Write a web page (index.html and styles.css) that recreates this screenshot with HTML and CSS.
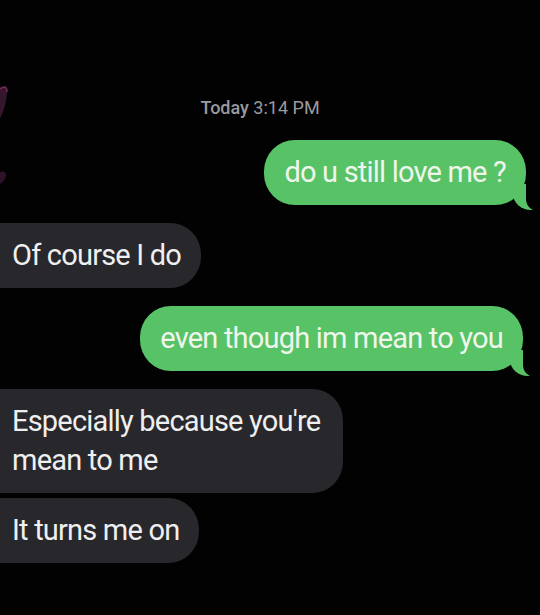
FILE: index.html
```html
<!DOCTYPE html>
<html>
<head>
    <title>Messages</title>
    <link rel="stylesheet" href="styles.css">
</head>
<body>
    <svg class="glare" width="12" height="120" viewBox="0 0 12 120">
        <path d="M0 20 Q8 15 7 26 Q5 42 0 50 Z" fill="#3a1832" opacity="0.9"/>
        <path d="M0 21 Q7 16 7 24" fill="none" stroke="#8a3366" stroke-width="1.5" opacity="0.8"/>
        <path d="M0 104 Q6 102 6 108 Q4 114 0 116 Z" fill="#3a1832" opacity="0.8"/>
    </svg>
    <div class="thread">
        <div class="stamp"><b>Today</b> 3:14 PM</div>
        <div class="bubble sent first">do u still love me ?</div>
        <div class="bubble recv">Of course I do</div>
        <div class="bubble sent second">even though im mean to you</div>
        <div class="bubble recv wide">Especially because you're mean to me</div>
        <div class="bubble recv">It turns me on</div>
    </div>
</body>
</html>
```

FILE: styles.css
```css
body {
    margin: 0;
    background-color: #020203;
    font-family: Roboto, "Liberation Sans", sans-serif;
    height: 615px;
    overflow: hidden;
    position: relative;
}
.glare {
    position: absolute;
    left: 0;
    top: 68px;
}
.thread {
    display: flex;
    flex-direction: column;
    padding-top: 97px;
}
.stamp {
    text-align: center;
    padding-right: 20px;
    color: #9a9a9d;
    font-size: 18px;
    line-height: 22px;
    margin-bottom: 21px;
}
.stamp b {
    font-weight: 500;
}
.bubble {
    position: relative;
    box-sizing: border-box;
    font-size: 29px;
    line-height: 39px;
    letter-spacing: -0.8px;
    padding: 13px 20px;
    border-radius: 31px;
    margin-bottom: 18px;
}
.sent {
    align-self: flex-end;
    background-color: #58c266;
    color: #eef6ec;
}
.sent.first {
    margin-right: 14px;
}
.sent.second {
    margin-right: 17px;
}
.sent::before {
    content: "";
    position: absolute;
    right: -9px;
    bottom: -5px;
    width: 22px;
    height: 26px;
    background-color: #58c266;
    border-bottom-left-radius: 18px 16px;
}
.sent::after {
    content: "";
    position: absolute;
    right: -26px;
    bottom: -6px;
    width: 26px;
    height: 28px;
    background-color: #020203;
    border-bottom-left-radius: 12px;
}
.recv {
    align-self: flex-start;
    background-color: #28272c;
    color: #efeff0;
    margin-left: -30px;
    padding-left: 42px;
    max-width: 373px;
}
.recv.wide {
    margin-bottom: 5px;
}
```
